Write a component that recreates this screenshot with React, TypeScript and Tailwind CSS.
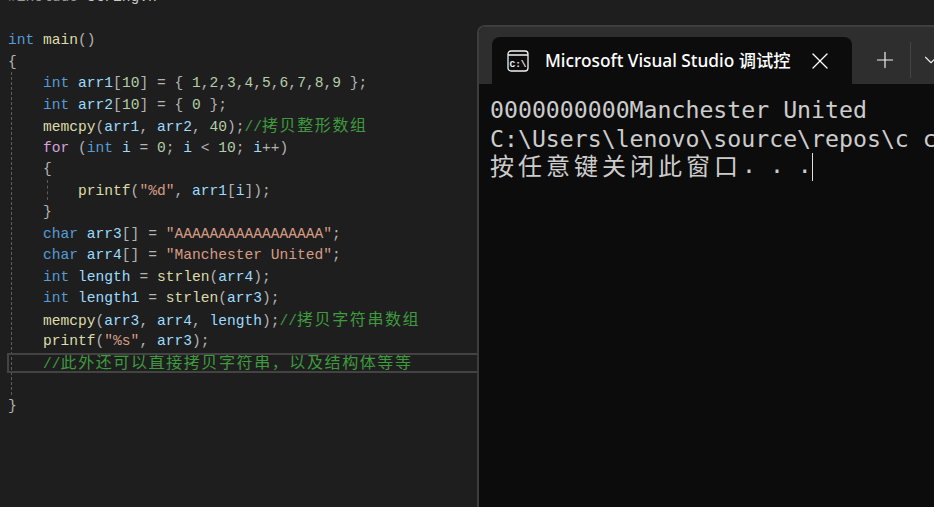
import { ChevronDown, Plus, X } from "lucide-react";
import type { ReactNode } from "react";

const Kw = ({ children }: { children: ReactNode }) => <span className="text-[#569cd6]">{children}</span>;
const Fn = ({ children }: { children: ReactNode }) => <span className="text-[#dcdcaa]">{children}</span>;
const Var = ({ children }: { children: ReactNode }) => <span className="text-[#9cdcfe]">{children}</span>;
const Num = ({ children }: { children: ReactNode }) => <span className="text-[#b5cea8]">{children}</span>;
const Str = ({ children }: { children: ReactNode }) => <span className="text-[#d69d85]">{children}</span>;
const Cm = ({ children }: { children: ReactNode }) => <span className="text-[#3f9a3f]">{children}</span>;
const Zh = ({ children }: { children: ReactNode }) => (
  <span className="text-[#3f9a3f] text-[16px] tracking-[1.6px] leading-none font-['Noto_Sans_CJK_SC',sans-serif]">{children}</span>
);

const Line = ({ children }: { children?: ReactNode }) => (
  <div className="h-[21.5px] leading-[21.5px] whitespace-pre">{children ?? " "}</div>
);

const CodePanel = () => (
  <div className="relative w-[477px] shrink-0 overflow-hidden pl-2 -mt-[13px] text-[14.6px] text-[#b4b4b4] font-['Liberation_Mono',monospace]">
    <Line>
      <span className="text-[#9b9b9b]">#include</span>
      <span className="text-[#c8c8c8]">{"<string.h>"}</span>
    </Line>
    <Line />
    <Line>
      <Kw>int</Kw> <Fn>main</Fn>()
    </Line>
    <Line>{"{"}</Line>
    <Line>
      {"    "}<Kw>int</Kw> <Var>arr1</Var>[<Num>10</Num>] = {"{ "}<Num>1</Num>,<Num>2</Num>,<Num>3</Num>,<Num>4</Num>,<Num>5</Num>,<Num>6</Num>,<Num>7</Num>,<Num>8</Num>,<Num>9</Num>{" };"}
    </Line>
    <Line>
      {"    "}<Kw>int</Kw> <Var>arr2</Var>[<Num>10</Num>] = {"{ "}<Num>0</Num>{" };"}
    </Line>
    <Line>
      {"    "}<Fn>memcpy</Fn>(<Var>arr1</Var>, <Var>arr2</Var>, <Num>40</Num>);<Cm>//</Cm><Zh>拷贝整形数组</Zh>
    </Line>
    <Line>
      {"    "}<span className="text-[#d8a0df]">for</span> (<Kw>int</Kw> <Var>i</Var> = <Num>0</Num>; <Var>i</Var> {"<"} <Num>10</Num>; <Var>i</Var>++)
    </Line>
    <Line>{"    {"}</Line>
    <Line>
      {"        "}<Fn>printf</Fn>(<Str>"%d"</Str>, <Var>arr1</Var>[<Var>i</Var>]);
    </Line>
    <Line>{"    }"}</Line>
    <Line>
      {"    "}<Kw>char</Kw> <Var>arr3</Var>[] = <Str>"AAAAAAAAAAAAAAAAA"</Str>;
    </Line>
    <Line>
      {"    "}<Kw>char</Kw> <Var>arr4</Var>[] = <Str>"Manchester United"</Str>;
    </Line>
    <Line>
      {"    "}<Kw>int</Kw> <Var>length</Var> = <Fn>strlen</Fn>(<Var>arr4</Var>);
    </Line>
    <Line>
      {"    "}<Kw>int</Kw> <Var>length1</Var> = <Fn>strlen</Fn>(<Var>arr3</Var>);
    </Line>
    <Line>
      {"    "}<Fn>memcpy</Fn>(<Var>arr3</Var>, <Var>arr4</Var>, <Var>length</Var>);<Cm>//</Cm><Zh>拷贝字符串数组</Zh>
    </Line>
    <Line>
      {"    "}<Fn>printf</Fn>(<Str>"%s"</Str>, <Var>arr3</Var>);
    </Line>
    <Line>
      {"    "}<Cm>//</Cm><Zh>此外还可以直接拷贝字符串，以及结构体等等</Zh>
    </Line>
    <Line />
    <Line>{"}"}</Line>

    {/* indent guides and current line box sit over the text */}
    <div className="absolute left-[11px] top-[85px] h-[323px] border-l border-dashed border-[#5c5c5c]" />
    <div className="absolute left-[47px] top-[193px] h-[20px] border-l border-dashed border-[#5c5c5c]" />
    <div className="absolute left-[7px] top-[366px] h-[20px] w-[470px] border-2 border-r-0 border-[#434343]" />
  </div>
);

const ConsoleIcon = () => (
  <svg width="22" height="22" viewBox="0 0 22 22" fill="none" className="shrink-0">
    <rect x="1" y="1" width="20" height="20" rx="3" stroke="#f2f2f2" strokeWidth="1.3" />
    <path d="M1 5h20" stroke="#f2f2f2" strokeWidth="1.3" />
    <text x="11" y="16.5" textAnchor="middle" fontSize="9.5" fontWeight="700" fill="#f2f2f2" fontFamily="Liberation Mono, monospace">
      C:\
    </text>
  </svg>
);

const Terminal = () => (
  <div className="mt-[25px] flex-1 min-w-0 h-[482px] overflow-hidden rounded-tl-lg border-l-2 border-t-2 border-[#3d3d3d] bg-[#0c0c0c]">
    <div className="flex h-[57px] items-end bg-[#2e2e2e] pl-[13px]">
      <div className="flex h-[47px] w-[360px] shrink-0 items-center rounded-t-lg bg-[#0c0c0c] pl-[15px]">
        <ConsoleIcon />
        <span className="ml-[16px] w-[245px] whitespace-nowrap text-[17.3px] font-medium text-white font-['Noto_Sans','Noto_Sans_CJK_SC',sans-serif]">
          Microsoft Visual Studio 调试控
        </span>
        <X size={28} strokeWidth={1.1} className="ml-[16px] shrink-0 text-white" />
      </div>
      <div className="flex h-[47px] items-center pb-[1px] text-[#f0f0f0]">
        <Plus size={26} strokeWidth={1.1} className="ml-[20px] shrink-0" />
        <div className="ml-[12px] h-[36px] w-px shrink-0 bg-[#454545]" />
        <ChevronDown size={22} strokeWidth={1.2} className="ml-[9px] shrink-0" />
      </div>
    </div>
    <div className="pl-[11px] pt-[12px] text-[23.2px] leading-[28.5px] whitespace-nowrap text-[#cccccc] font-['DejaVu_Sans_Mono',monospace]">
      <div>0000000000Manchester United</div>
      <div>C:\Users\lenovo\source\repos\c c</div>
      <div className="flex h-[24px] items-center leading-[24px]">
        <span className="text-[24px] tracking-[4px] font-['Noto_Sans_CJK_SC',sans-serif]">按任意键关闭此窗口</span>
        <span>. . .</span>
        <span className="mt-[4px] h-[28px] w-px shrink-0 bg-[#e0e0e0]" />
      </div>
    </div>
  </div>
);

export default function App() {
  return (
    <div className="flex h-[507px] w-[934px] overflow-hidden bg-[#1e1e1e]">
      <CodePanel />
      <Terminal />
    </div>
  );
}
